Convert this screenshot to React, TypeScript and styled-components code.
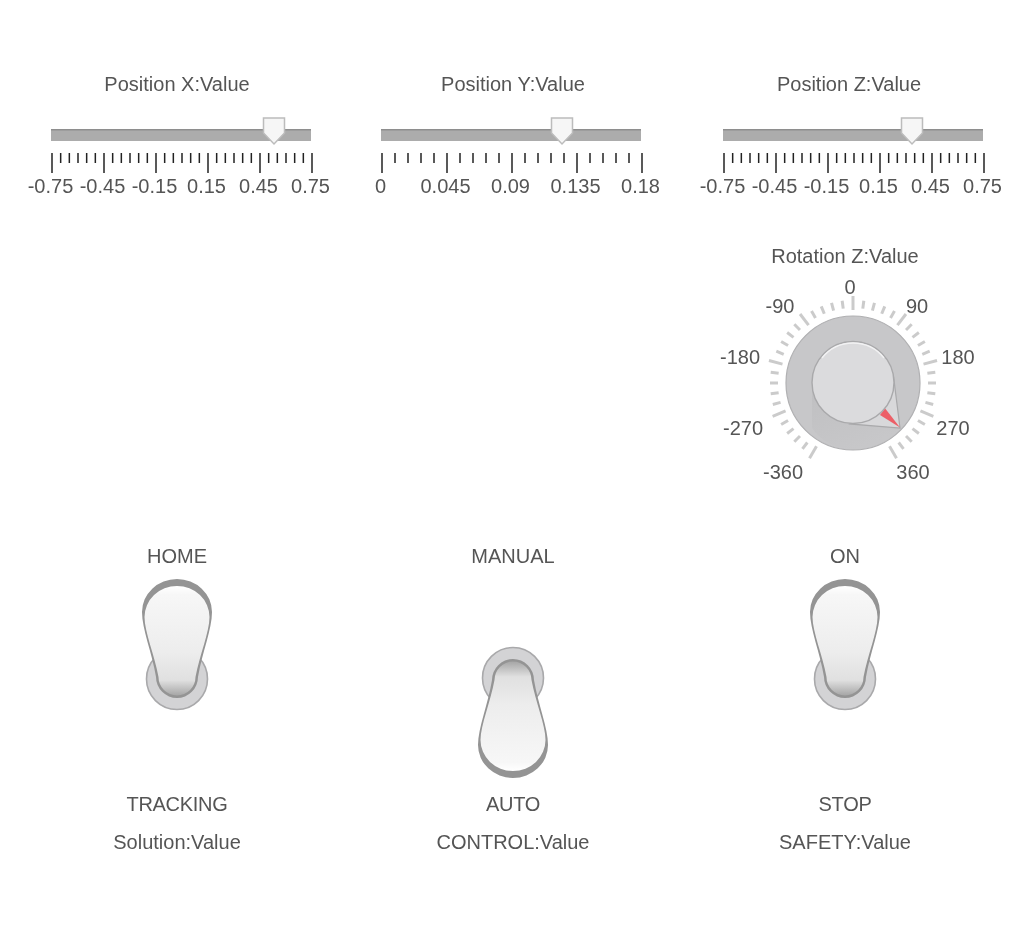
import React from 'react'
import styled, { createGlobalStyle } from 'styled-components'

const GlobalStyle = createGlobalStyle`
    html, body {
        margin: 0;
        padding: 0;
        background: #fff;
    }
`

const polar = (cx: number, cy: number, r: number, deg: number) => {
    const rad = (deg * Math.PI) / 180
    return { x: cx + r * Math.sin(rad), y: cy - r * Math.cos(rad) }
}

type SliderProps = {
    title: string
    labels: string[]
    minors: number
    inset: number
    thumb: number
}

const Slider = ({ title, labels, minors, inset, thumb }: SliderProps) => {
    const span = 260
    const sections = labels.length - 1
    const steps = sections * (minors + 1)
    const ticks = Array.from({ length: steps + 1 }, (_, i) => ({
        x: inset + 1 + (span * i) / steps,
        major: i % (minors + 1) === 0,
    }))

    return (
        <SliderColumn>
            <Caption>{title}</Caption>
            <SliderSvg viewBox="0 0 336 85">
                <rect x={inset} y={14} width={span} height={12} fill="#acacac" />
                <rect x={inset} y={14} width={span} height={1.5} fill="#8e8e8e" />
                <path
                    d={`M${thumb - 10.5} 3 H${thumb + 10.5} V18 L${thumb} 29 L${thumb - 10.5} 18 Z`}
                    fill="#f6f6f6"
                    stroke="#bcbcbc"
                    strokeWidth="1.5"
                />
                {ticks.map((t) => (
                    <line
                        key={t.x}
                        x1={t.x}
                        x2={t.x}
                        y1={38}
                        y2={t.major ? 58 : 48}
                        stroke="#222"
                        strokeWidth="1.5"
                    />
                ))}
                {labels.map((label, i) => (
                    <ScaleText key={label} x={inset - 0.5 + (span * i) / sections} y={78} textAnchor="middle">
                        {label}
                    </ScaleText>
                ))}
            </SliderSvg>
        </SliderColumn>
    )
}

const knobLabels = [
    { text: '0', x: 150, y: 24 },
    { text: '-90', x: 80, y: 43 },
    { text: '90', x: 217, y: 43 },
    { text: '-180', x: 40, y: 94 },
    { text: '180', x: 258, y: 94 },
    { text: '-270', x: 43, y: 165 },
    { text: '270', x: 253, y: 165 },
    { text: '-360', x: 83, y: 209 },
    { text: '360', x: 213, y: 209 },
]

const Knob = () => {
    const cx = 153
    const cy = 113
    const ticks = Array.from({ length: 41 }, (_, i) => ({
        deg: -150 + i * 7.5,
        major: i % 5 === 0,
    }))

    return (
        <KnobPanel>
            <Caption>Rotation Z:Value</Caption>
            <KnobSvg viewBox="0 0 290 220">
                <defs>
                    <linearGradient id="knobShade" x1="0" y1="0" x2="0.5" y2="1">
                        <stop offset="0" stopColor="#bfbfc1" />
                        <stop offset="1" stopColor="#c7c7c9" />
                    </linearGradient>
                </defs>
                {ticks.map((t) => {
                    const a = polar(cx, cy, t.major ? 73 : 75, t.deg)
                    const b = polar(cx, cy, t.major ? 87 : 83, t.deg)
                    return (
                        <line
                            key={t.deg}
                            x1={a.x}
                            y1={a.y}
                            x2={b.x}
                            y2={b.y}
                            stroke="#cbcbcb"
                            strokeWidth="3"
                        />
                    )
                })}
                <circle cx={cx} cy={cy} r={67} fill="#c7c7c9" stroke="#b0b0b2" strokeWidth="1.2" />
                <path d="M112 113 V158 Q124 176 150 179 Q180 176 200 158 L150 154 Z" fill="url(#knobShade)" />
                <path d="M193.7 107.9 L200 158 L149.6 153.9 Z" fill="#d8d8da" stroke="#a9a9ab" strokeWidth="1.2" />
                <path d="M185 138.3 L200 157.5 L180 145 Z" fill="#ec5f67" />
                <circle cx={cx} cy={112.5} r={41} fill="#dbdbdd" stroke="#a9a9ab" strokeWidth="1.4" />
                <path d="M122 88 A39.5 39.5 0 0 1 184 88" fill="none" stroke="#f2f2f3" strokeWidth="1.4" />
                {knobLabels.map((l) => (
                    <ScaleText key={l.text} x={l.x} y={l.y} textAnchor="middle">
                        {l.text}
                    </ScaleText>
                ))}
            </KnobSvg>
        </KnobPanel>
    )
}

const LEVER_OUTER = 'M5 37 A35 33 0 0 1 75 37 C75 54 65 78 61 102 A21 21 0 0 1 19 102 C15 78 5 54 5 37 Z'
const LEVER_INNER = 'M7.5 42 A32.5 31 0 0 1 72.5 42 C72.5 57 62.5 80 58.5 102 A18.5 18.5 0 0 1 21.5 102 C17.5 80 7.5 57 7.5 42 Z'

type ToggleProps = {
    id: string
    top: string
    bottom: string
    footer: string
    down?: boolean
}

const Toggle = ({ id, top, bottom, footer, down }: ToggleProps) => (
    <ToggleColumn>
        <Caption>{top}</Caption>
        <ToggleSvg viewBox="0 0 80 207" $down={down}>
            <defs>
                <linearGradient id={id} x1="0" y1="0" x2="0" y2="1">
                    <stop offset="0" stopColor="#ffffff" />
                    <stop offset="0.08" stopColor="#f7f7f7" />
                    <stop offset="0.6" stopColor="#ededed" />
                    <stop offset="0.86" stopColor="#e0e0e0" />
                    <stop offset="1" stopColor="#a6a6a6" />
                </linearGradient>
            </defs>
            <circle cx="40" cy="104" r="30.5" fill="#d3d3d5" stroke="#a9a9ab" strokeWidth="1.6" />
            <path d={LEVER_OUTER} fill="#949494" />
            <path d={LEVER_INNER} fill={`url(#${id})`} />
        </ToggleSvg>
        <BottomCaption>{bottom}</BottomCaption>
        <FooterCaption>{footer}</FooterCaption>
    </ToggleColumn>
)

const App = () => {
    return (
        <Page>
            <GlobalStyle />
            <SliderRow>
                <Slider
                    title="Position X:Value"
                    labels={['-0.75', '-0.45', '-0.15', '0.15', '0.45', '0.75']}
                    minors={5}
                    inset={42}
                    thumb={265}
                />
                <Slider
                    title="Position Y:Value"
                    labels={['0', '0.045', '0.09', '0.135', '0.18']}
                    minors={4}
                    inset={36}
                    thumb={217}
                />
                <Slider
                    title="Position Z:Value"
                    labels={['-0.75', '-0.45', '-0.15', '0.15', '0.45', '0.75']}
                    minors={5}
                    inset={42}
                    thumb={231}
                />
            </SliderRow>
            <Knob />
            <ToggleRow>
                <Toggle id="leverHome" top="HOME" bottom="TRACKING" footer="Solution:Value" />
                <Toggle id="leverAuto" top="MANUAL" bottom="AUTO" footer="CONTROL:Value" down />
                <Toggle id="leverOn" top="ON" bottom="STOP" footer="SAFETY:Value" />
            </ToggleRow>
        </Page>
    )
}

export default App

const Page = styled.div`
    width: 1028px;
    height: 946px;
    box-sizing: border-box;
    padding: 74px 0 0 9px;
    overflow: hidden;
    font-family: "Liberation Sans", Arial, sans-serif;
    font-size: 20px;
    color: #555;
    filter: blur(0.6px);
`

const Caption = styled.div`
    height: 20px;
    line-height: 20px;
    text-align: center;
    white-space: nowrap;
`

const BottomCaption = styled(Caption)`
    margin-top: 12px;
    letter-spacing: -0.3px;
`

const FooterCaption = styled(Caption)`
    margin-top: 18px;
`

const ScaleText = styled.text`
    font-family: "Liberation Sans", Arial, sans-serif;
    font-size: 20px;
    fill: #555;
`

const SliderRow = styled.div`
    display: grid;
    grid-template-columns: repeat(3, 336px);
`

const SliderColumn = styled.div`
    display: flex;
    flex-direction: column;
`

const SliderSvg = styled.svg`
    display: block;
    width: 336px;
    height: 85px;
    margin-top: 21px;
    overflow: visible;
`

const KnobPanel = styled.div`
    width: 328px;
    margin: 46px 0 0 672px;
`

const KnobSvg = styled.svg`
    display: block;
    width: 290px;
    height: 220px;
    margin: 4px 0 0 19px;
    overflow: visible;
`

const ToggleRow = styled.div`
    display: grid;
    grid-template-columns: 336px 336px 328px;
    margin-top: 56px;
`

const ToggleColumn = styled.div`
    display: flex;
    flex-direction: column;
    align-items: center;
`

const ToggleSvg = styled.svg<{ $down?: boolean }>`
    display: block;
    width: 80px;
    height: 207px;
    margin-top: 9px;
    transform: ${(p) => (p.$down ? 'scaleY(-1)' : 'none')};
`
